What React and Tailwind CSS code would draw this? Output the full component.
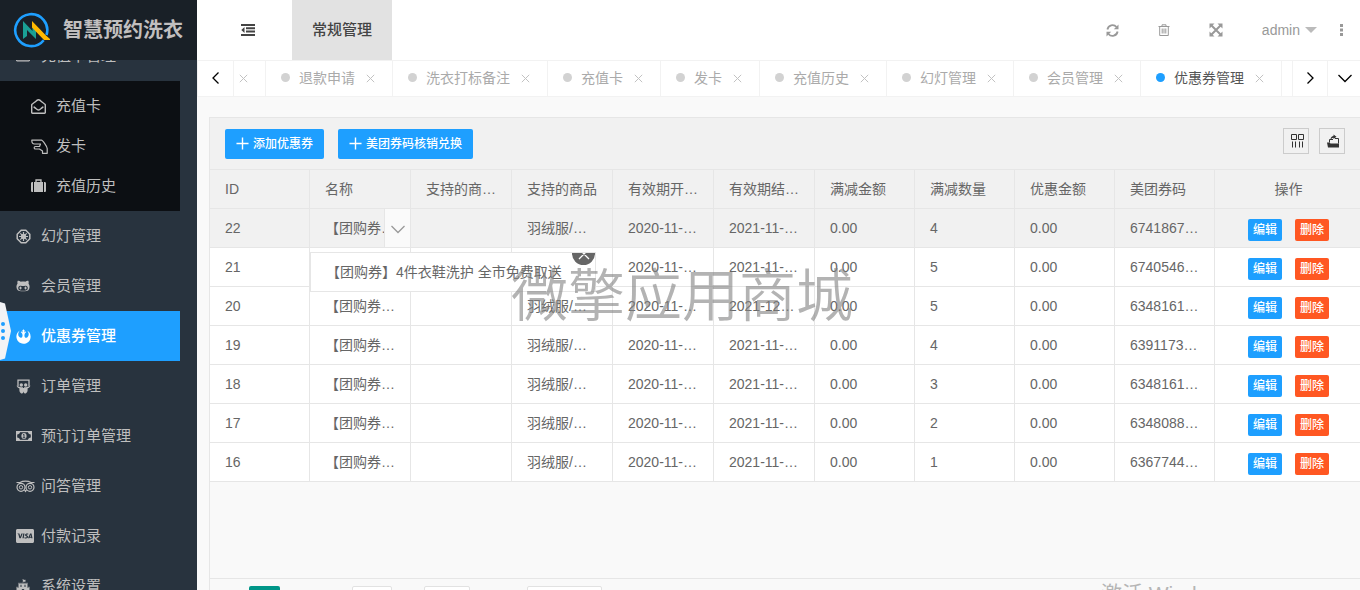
import React from "react";
import {
  FaRegEnvelopeOpen, FaGithubAlt, FaRebel, FaCcVisa, FaFortAwesome, FaRegCreditCard,
} from "react-icons/fa";

const Line = ({ d, size = 14, w = 1, box = 14, className = "" }) => (
  <svg width={size} height={size} viewBox={`0 0 ${box} ${box}`} fill="none" stroke="currentColor" strokeWidth={w} className={`shrink-0 ${className}`} aria-hidden="true">
    <path d={d} />
  </svg>
);

const Logo = () => (
  <svg width="38" height="38" viewBox="0 0 38 38" aria-hidden="true" className="shrink-0">
    <path d="M31.700 29.200A16 16 0 1 1 34.500 24" fill="none" stroke="#1e9fff" strokeWidth="2.600" />
    <path d="M11 28V10L20.500 20V12L24 15.500V28L15 19V25Z" fill="#1aa094" />
    <path d="M20 10V16.500L32 29H38V28L34 24.500Z" fill="#ffb800" />
  </svg>
);

const Owl = () => (
  <svg width="19" height="13" viewBox="0 0 19 13" fill="none" stroke="currentColor" aria-hidden="true">
    <circle cx="5" cy="7.300" r="4" strokeWidth="1.200" />
    <circle cx="14" cy="7.300" r="4" strokeWidth="1.200" />
    <circle cx="5" cy="7.300" r="1.700" />
    <circle cx="14" cy="7.300" r="1.700" />
    <path d="M.5 2.500H4C7 .7 12 .7 15 2.500H18.500M8.500 10L9.500 11.500L10.500 10" strokeWidth="1.200" />
  </svg>
);

const Wheel = () => (
  <svg width="15" height="15" viewBox="0 0 15 15" fill="none" stroke="currentColor" aria-hidden="true">
    <path d="M5.200 1.200H9.800L13.800 5.200V9.800L9.800 13.800H5.200L1.200 9.800V5.200Z" strokeWidth="1.500" />
    <path d="M7.500 3V12M3 7.500H12M4.300 4.300L10.700 10.700M10.700 4.300L4.300 10.700" strokeWidth="1.200" />
    <circle cx="7.500" cy="7.500" r="2.200" fill="currentColor" />
  </svg>
);

const Slides = () => (
  <svg width="15" height="15" viewBox="0 0 15 15" fill="currentColor" aria-hidden="true">
    <path d="M2 7V1.200H13V7" fill="none" stroke="currentColor" strokeWidth="1.300" />
    <circle cx="5.300" cy="6" r="1.700" />
    <circle cx="9.700" cy="6" r="1.700" />
    <path d="M.5 6.500C2.500 8 5 8.300 7 8.200V9H8V8.200C10 8.300 12.500 8 14.500 6.500C14 8 12.800 9 11.500 9.500C12 12 11 14.500 9 14.500C8 14.500 7.800 13.500 7.500 12.500C7.200 13.500 7 14.500 6 14.500C4 14.500 3 12 3.500 9.500C2.200 9 1 8 .5 6.500Z" />
  </svg>
);

const Money = () => (
  <svg width="16" height="12" viewBox="0 0 16 12" aria-hidden="true">
    <rect x=".6" y="1.600" width="14.800" height="8.800" fill="none" stroke="currentColor" strokeWidth="1.200" />
    <path d="M1 2H4C4 3.500 2.700 4.500 1 4.500ZM15 2V4.500C13.300 4.500 12 3.500 12 2ZM15 10H12C12 8.500 13.300 7.500 15 7.500ZM1 10V7.500C2.700 7.500 4 8.500 4 10Z" fill="currentColor" />
    <ellipse cx="8" cy="6" rx="2.600" ry="3" fill="currentColor" />
    <path d="M7 5L8 4.300V7.500M6.800 7.700H9.200" fill="none" stroke="#28333e" strokeWidth=".9" />
  </svg>
);

const Hand = () => (
  <svg width="17" height="15" viewBox="0 0 17 15" fill="none" stroke="currentColor" strokeWidth="1.200" strokeLinejoin="round" aria-hidden="true">
    <path d="M11.500 14.300V12L8.500 10H4.500C2.700 10 2.700 7.500 4.500 7.500H8.500L9.500 5H3.500C1.500 5 .8 3.500 .8 1.200H10.500C11.500 1.200 16.200 7.500 16.200 9.500V14.300Z" />
  </svg>
);

const Suitcase = () => (
  <svg width="15" height="14" viewBox="0 0 15 14" aria-hidden="true">
    <path d="M0 4.500C0 3.500.5 3 1.500 3H2V13H1.500C.5 13 0 12.500 0 11.500ZM3 3H12V13H3ZM13 3H13.500C14.500 3 15 3.500 15 4.500V11.500C15 12.500 14.500 13 13.500 13H13Z" fill="currentColor" />
    <path d="M5 3V1H10V3" fill="none" stroke="currentColor" strokeWidth="1.300" />
  </svg>
);

const Outdent = () => (
  <svg width="14" height="12" viewBox="0 0 14 12" fill="currentColor" aria-hidden="true">
    <path d="M0 0H14V2H0ZM5 3.300H14V5.200H5ZM5 6.600H14V8.500H5ZM0 10H14V12H0ZM3.500 3V9L.3 6Z" />
  </svg>
);

const Refresh = () => (
  <svg width="13" height="13" viewBox="0 0 13 13" fill="none" stroke="currentColor" strokeWidth="1.800" aria-hidden="true">
    <path d="M1.400 5.500A5.200 5.200 0 0 1 10.500 3M11.600 7.500A5.200 5.200 0 0 1 2.500 10" />
    <path d="M12.500.5V5.200H7.800ZM.5 12.500V7.800H5.200Z" fill="currentColor" stroke="none" />
  </svg>
);

const Trash = () => (
  <Line size={12} box={12} d="M.5 2.500H11.500M4 2.500V.8H8V2.500M1.700 2.500V11.500H10.300V2.500M4.200 4.500V9.500M6 4.500V9.500M7.800 4.500V9.500" />
);

const Expand = () => (
  <svg width="14" height="14" viewBox="0 0 14 14" aria-hidden="true">
    <path d="M.5 .5H5.500L.5 5.500ZM13.500 .5V5.500L8.500 .5ZM13.500 13.500H8.500L13.500 8.500ZM.5 13.500V8.500L5.500 13.500Z" fill="currentColor" />
    <path d="M2.500 2.500L11.500 11.500M11.500 2.500L2.500 11.500" stroke="currentColor" strokeWidth="2" />
  </svg>
);

const subItems = [
  { icon: <FaRegEnvelopeOpen size={15} />, label: "充值卡" },
  { icon: <Hand />, label: "发卡" },
  { icon: <Suitcase />, label: "充值历史" },
];

const items = [
  { icon: <Wheel />, label: "幻灯管理" },
  { icon: <FaGithubAlt size={14} />, label: "会员管理" },
  { icon: <FaRebel size={15} />, label: "优惠券管理", active: true },
  { icon: <Slides />, label: "订单管理" },
  { icon: <Money />, label: "预订订单管理" },
  { icon: <Owl />, label: "问答管理" },
  { icon: <FaCcVisa size={18} />, label: "付款记录" },
  { icon: <FaFortAwesome size={14} />, label: "系统设置" },
];

const tabs = ["退款申请", "洗衣打标备注", "充值卡", "发卡", "充值历史", "幻灯管理", "会员管理", "优惠券管理"];
const current = "优惠券管理";

const heads = ["ID", "名称", "支持的商…", "支持的商品", "有效期开…", "有效期结…", "满减金额", "满减数量", "优惠金额", "美团券码"];

const rows = [
  ["22", "2021-11-…", "4", "6741867…"],
  ["21", "2021-11-…", "5", "6740546…"],
  ["20", "2021-12…", "5", "6348161…"],
  ["19", "2021-11-…", "4", "6391173…"],
  ["18", "2021-11-…", "3", "6348161…"],
  ["17", "2021-11-…", "2", "6348088…"],
  ["16", "2021-11-…", "1", "6367744…"],
];

function NavLink({ icon, label, active }) {
  return (
    <a href="#" className={`flex h-[50px] w-[180px] shrink-0 items-center pl-4 text-[15px] ${active ? "bg-[#1e9fff] font-medium text-white" : "text-[#bfbfbf]"}`}>
      <span className="flex w-[25px] shrink-0 items-center">{icon}</span>
      <span>{label}</span>
    </a>
  );
}

function Sidebar() {
  return (
    <aside className="relative flex w-[197px] shrink-0 flex-col overflow-hidden bg-[#28333e]">
      <div className="z-10 flex h-[60px] shrink-0 items-center bg-[#192027] pl-3 text-[#c1bfbf]">
        <Logo />
        <h1 className="ml-[13px] text-xl font-bold whitespace-nowrap">智慧预约洗衣</h1>
      </div>
      <nav className="-mt-[29px] flex flex-col">
        <NavLink icon={<FaRegCreditCard size={14} />} label="充值卡管理" />
        <div className="w-[180px] bg-[#0c0f13] py-[5px]">
          {subItems.map((s) => (
            <a key={s.label} href="#" className="flex h-10 items-center pl-[31px] text-[15px] text-[#bfbfbf]">
              <span className="flex w-[25px] shrink-0">{s.icon}</span>
              <span>{s.label}</span>
            </a>
          ))}
        </div>
        {items.map((i) => <NavLink key={i.label} {...i} />)}
      </nav>
      <button aria-label="展开" className="absolute top-[302px] left-0 z-10">
        <svg width="11" height="58" viewBox="0 0 11 58" aria-hidden="true">
          <path d="M0 0L5 1.500L11 29L5 56.500L0 58Z" fill="#f2f3f5" />
          <g fill="#1e9fff"><circle cx="3" cy="22" r="2" /><circle cx="3" cy="29" r="2" /><circle cx="3" cy="36" r="2" /></g>
        </svg>
      </button>
    </aside>
  );
}

function TopBar() {
  return (
    <header className="flex h-[60px] shrink-0 items-center bg-white text-[#999]">
      <button aria-label="收起菜单" className="flex w-[95px] items-center justify-center pl-[7px] text-[#444]"><Outdent /></button>
      <a href="#" className="flex h-full w-[100px] items-center justify-center bg-[#e2e2e2] text-[15px] font-medium text-[#444]">常规管理</a>
      <div className="ml-auto flex items-center pr-[17px]">
        <button aria-label="刷新" className="mr-[39px]"><Refresh /></button>
        <button aria-label="清除" className="mr-[39px]"><Trash /></button>
        <button aria-label="全屏" className="mr-[39px]"><Expand /></button>
        <button className="flex items-center gap-[5px] text-sm">
          admin
          <svg width="12" height="6" viewBox="0 0 12 6" aria-hidden="true"><path d="M0 0H12L6 6Z" fill="#bbb" /></svg>
        </button>
        <button aria-label="更多" className="ml-[23px]">
          <svg width="3" height="12" viewBox="0 0 3 12" fill="currentColor" aria-hidden="true"><path d="M0 0H3V3H0ZM0 4.500H3V7.500H0ZM0 9H3V12H0Z" /></svg>
        </button>
      </div>
    </header>
  );
}

const Close = () => (
  <button aria-label="关闭" className="text-[#c2c2c2]"><Line size={9} box={9} d="M.8 .8L8.200 8.200M8.200 .8L.8 8.200" /></button>
);

function TabBar() {
  return (
    <div className="flex h-[37px] shrink-0 border-y border-l border-[#f2f2f2] bg-white">
      <button aria-label="向左" className="flex w-9 shrink-0 items-center justify-center border-r border-[#f2f2f2] pb-[2px] text-black"><Line d="M9.500 1.500L4 7L9.500 12.500" w={1.3} /></button>
      <div className="flex min-w-0 flex-1 overflow-hidden">
        <div className="flex w-8 shrink-0 items-center border-r border-[#f2f2f2] pl-[5px]"><Close /></div>
        {tabs.map((t) => (
          <div key={t} className="flex shrink-0 items-center border-r border-[#f2f2f2] pr-[17px] pl-[15px]">
            <a href="#" className={`flex items-center gap-[9px] pb-[2px] text-sm ${t === current ? "text-[#555]" : "text-[#aaa]"}`}>
              <span className={`size-[9px] rounded-full ${t === current ? "bg-[#1e9fff]" : "bg-[#d2d2d2]"}`} />
              {t}
            </a>
            <span className="ml-[11px] flex"><Close /></span>
          </div>
        ))}
      </div>
      <button aria-label="向右" className="flex w-[35px] shrink-0 items-center justify-center border-l border-[#f2f2f2] pb-[2px] text-black"><Line d="M4.500 1.500L10 7L4.500 12.500" w={1.3} /></button>
      <button aria-label="标签操作" className="flex w-[33px] shrink-0 items-center justify-center border-l border-[#f2f2f2] pb-[2px] pl-[2px] text-black"><Line d="M.5 4L7 10.500L13.500 4" w={1.3} /></button>
    </div>
  );
}

const cell = "h-[39px] border-r border-b border-[#e6e6e6] px-[15px] text-left font-normal whitespace-nowrap";

function NameCell({ open }) {
  if (!open) return <td className={cell}>【团购券…</td>;
  return (
    <td className={`${cell} relative`}>
      <div className="-mr-[15px] overflow-hidden">【团购券…</div>
      <button aria-label="展开内容" className="absolute inset-y-0 right-0 flex w-[26px] items-center justify-center border-l border-[#e6e6e6] bg-[#fafafa] text-[#999]">
        <Line d="M.5 4L7 10.500L13.500 4" w={1.3} className="mt-[2px]" />
      </button>
      <div className="absolute top-[43px] left-0 z-10 flex h-10 w-[286px] items-center overflow-hidden border border-[#e6e6e6] bg-white pl-[15px]">
        【团购券】4件衣鞋洗护 全市免费取送
        <button aria-label="关闭提示" className="absolute -top-[11px] right-0 flex size-[23px] items-center justify-center rounded-full bg-[#666] text-white">
          <Line size={12} box={12} d="M1 1L11 11M11 1L1 11" w={1.3} />
        </button>
      </div>
    </td>
  );
}

function CouponTable() {
  return (
    <table className="w-full table-fixed border-separate border-spacing-0 text-sm leading-5 text-[#666]">
      <colgroup>
        <col className="w-[100px]" />
        {[1, 2, 3, 4, 5].map((n) => <col key={n} className="w-[101px]" />)}
        {[1, 2, 3, 4].map((n) => <col key={n} className="w-[100px]" />)}
        <col />
      </colgroup>
      <thead className="bg-[#f1f1f1]">
        <tr>
          {heads.map((h) => <th key={h} scope="col" className={cell}>{h}</th>)}
          <th scope="col" className="border-b border-[#e6e6e6] pl-[2px] text-center font-normal">操作</th>
        </tr>
      </thead>
      <tbody>
        {rows.map(([id, end, count, code], i) => (
          <tr key={id} className={i === 0 ? "bg-[#f1f1f1]" : "bg-white"}>
            <td className={cell}>{id}</td>
            <NameCell open={i === 0} />
            <td className={cell} />
            <td className={cell}>羽绒服/…</td>
            <td className={cell}>2020-11-…</td>
            <td className={cell}>{end}</td>
            <td className={cell}>0.00</td>
            <td className={cell}>{count}</td>
            <td className={cell}>0.00</td>
            <td className={cell}>{code}</td>
            <td className="border-b border-[#e6e6e6] pl-[2px]">
              <div className="flex justify-center gap-[13px] pt-1 text-xs font-medium text-white">
                <button className="h-[22px] w-[34px] rounded-xs bg-[#1e9fff]">编辑</button>
                <button className="h-[22px] w-[34px] rounded-xs bg-[#ff5722]">删除</button>
              </div>
            </td>
          </tr>
        ))}
      </tbody>
    </table>
  );
}

function Panel() {
  const add = "flex h-[30px] items-center gap-1 rounded-xs bg-[#1e9fff] px-[11px] text-xs font-medium text-white";
  const tool = "flex size-[26px] items-center justify-center border border-[#ccc] text-[#333]";
  return (
    <section className="relative mt-5 ml-3 flex min-h-0 flex-1 flex-col border-t border-l border-[#e6e6e6]">
      <div className="flex h-[52px] shrink-0 items-center justify-between border-b border-[#e6e6e6] bg-[#f1f1f1] px-[15px]">
        <div className="flex gap-[14px]">
          <button className={add}><Line size={13} d="M7 .5V13.500M.5 7H13.500" w={1.5} />添加优惠券</button>
          <button className={add}><Line size={13} d="M7 .5V13.500M.5 7H13.500" w={1.5} />美团券码核销兑换</button>
        </div>
        <div className="flex gap-[10px] pb-[5px]">
          <button aria-label="筛选列" className={tool}><Line d="M1.500 .5H6.500V5.500H1.500ZM8.500 .5H13.500V5.500H8.500ZM2.500 7.500V13.500M5.500 7.500V13.500M9.500 7.500V13.500M12.500 7.500V13.500" className="ml-[2px]" /></button>
          <button aria-label="导出" className={tool}>
            <svg width="14" height="14" viewBox="0 0 14 14" className="ml-[2px]" aria-hidden="true">
              <path d="M1 8.500H3.500L4.500 9.500H13V13.500H2Z" fill="currentColor" />
              <path d="M3.500 8.500V5.500H7M9 4.500H12.500V9.500" fill="none" stroke="currentColor" />
              <path d="M4.500 6C4.500 3 6 2 7.500 2V.5L10.500 2.800L7.500 5V3.700C6.500 3.700 5.500 4.500 4.500 6Z" fill="currentColor" />
            </svg>
          </button>
        </div>
      </div>
      <div className="min-h-0 flex-1 overflow-hidden"><CouponTable /></div>
      <footer className="flex h-3 shrink-0 items-start overflow-hidden border-t border-[#e6e6e6] pt-[7px] pl-[39px]">
        <button aria-label="第 1 页" aria-current="page" className="h-7 w-[31px] shrink-0 rounded-xs bg-[#009688]" />
        <input aria-label="页码" className="ml-[72px] h-7 w-10 shrink-0 rounded-xs border border-[#e2e2e2] bg-white" />
        <button aria-label="确定" className="ml-8 h-7 w-[46px] shrink-0 rounded-xs border border-[#e2e2e2] bg-white" />
        <select aria-label="每页条数" className="ml-[57px] h-7 w-[75px] shrink-0 appearance-none rounded-xs border border-[#e2e2e2] bg-white" />
        <p className="-mt-[6px] ml-auto pr-[126px] text-[21px] leading-7 whitespace-nowrap text-[#b5b5b5]">激活 Windows</p>
      </footer>
      <p className="pointer-events-none absolute top-[143px] left-[301px] z-20 text-[57px] leading-[70px] font-[350] whitespace-nowrap text-[#808080]/60">微擎应用商城</p>
    </section>
  );
}

export default function App() {
  return (
    <div className="flex h-screen overflow-hidden bg-[#f9f9f9] font-['Liberation_Sans','Noto_Sans_CJK_SC',sans-serif]">
      <Sidebar />
      <main className="flex min-w-0 flex-1 flex-col">
        <TopBar />
        <TabBar />
        <Panel />
      </main>
    </div>
  );
}
